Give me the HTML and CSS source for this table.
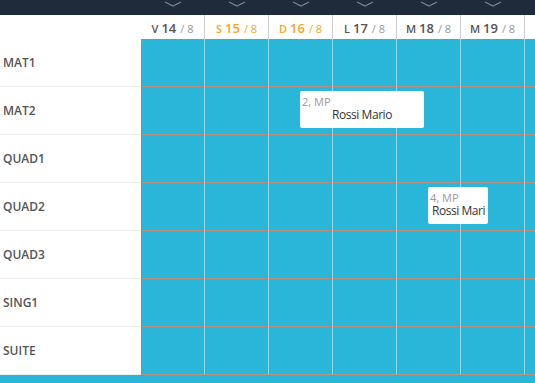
FILE: index.html
```html
<!DOCTYPE html>
<html lang="it">
<head>
<meta charset="utf-8">
<title>Planning camere</title>
<link rel="stylesheet" href="styles.css">
</head>
<body>
<div class="page">
  <div class="topbar">
    <div class="tb-spacer"></div>
    <div class="tb-col"><svg class="chev" viewBox="0 0 18 6" width="18" height="6"><polyline points="1,1 9,5 17,1"/></svg></div>
    <div class="tb-col"><svg class="chev" viewBox="0 0 18 6" width="18" height="6"><polyline points="1,1 9,5 17,1"/></svg></div>
    <div class="tb-col"><svg class="chev" viewBox="0 0 18 6" width="18" height="6"><polyline points="1,1 9,5 17,1"/></svg></div>
    <div class="tb-col"><svg class="chev" viewBox="0 0 18 6" width="18" height="6"><polyline points="1,1 9,5 17,1"/></svg></div>
    <div class="tb-col"><svg class="chev" viewBox="0 0 18 6" width="18" height="6"><polyline points="1,1 9,5 17,1"/></svg></div>
    <div class="tb-col"><svg class="chev" viewBox="0 0 18 6" width="18" height="6"><polyline points="1,1 9,5 17,1"/></svg></div>
    <div class="tb-col"></div>
  </div>

  <div class="header">
    <div class="h-label"></div>
    <div class="h-day"><span class="d">V</span><span class="n">14</span><span class="m">/ 8</span></div>
    <div class="h-day weekend"><span class="d">S</span><span class="n">15</span><span class="m">/ 8</span></div>
    <div class="h-day weekend"><span class="d">D</span><span class="n">16</span><span class="m">/ 8</span></div>
    <div class="h-day"><span class="d">L</span><span class="n">17</span><span class="m">/ 8</span></div>
    <div class="h-day"><span class="d">M</span><span class="n">18</span><span class="m">/ 8</span></div>
    <div class="h-day"><span class="d">M</span><span class="n">19</span><span class="m">/ 8</span></div>
    <div class="h-day"></div>
  </div>

  <div class="board">
    <div class="row"><div class="label">MAT1</div><div class="cell"></div><div class="cell"></div><div class="cell"></div><div class="cell"></div><div class="cell"></div><div class="cell"></div><div class="cell"></div></div>
    <div class="row"><div class="label">MAT2</div><div class="cell"></div><div class="cell"></div><div class="cell"></div><div class="cell"></div><div class="cell"></div><div class="cell"></div><div class="cell"></div></div>
    <div class="row"><div class="label">QUAD1</div><div class="cell"></div><div class="cell"></div><div class="cell"></div><div class="cell"></div><div class="cell"></div><div class="cell"></div><div class="cell"></div></div>
    <div class="row"><div class="label">QUAD2</div><div class="cell"></div><div class="cell"></div><div class="cell"></div><div class="cell"></div><div class="cell"></div><div class="cell"></div><div class="cell"></div></div>
    <div class="row"><div class="label">QUAD3</div><div class="cell"></div><div class="cell"></div><div class="cell"></div><div class="cell"></div><div class="cell"></div><div class="cell"></div><div class="cell"></div></div>
    <div class="row"><div class="label">SING1</div><div class="cell"></div><div class="cell"></div><div class="cell"></div><div class="cell"></div><div class="cell"></div><div class="cell"></div><div class="cell"></div></div>
    <div class="row"><div class="label">SUITE</div><div class="cell"></div><div class="cell"></div><div class="cell"></div><div class="cell"></div><div class="cell"></div><div class="cell"></div><div class="cell"></div></div>

    <div class="booking booking-a">
      <div class="b-meta">2, MP</div>
      <div class="b-name">Rossi Mario</div>
    </div>
    <div class="booking booking-b">
      <div class="b-meta">4, MP</div>
      <div class="b-name">Rossi Mari</div>
    </div>
  </div>

  <div class="footer"></div>
</div>
</body>
</html>
```

FILE: styles.css
```css
html, body {
  margin: 0;
  padding: 0;
}

body {
  width: 535px;
  height: 383px;
  overflow: hidden;
  background: #ffffff;
  font-family: "Open Sans", "Noto Sans", sans-serif;
}

.page {
  width: 535px;
  overflow: hidden;
}

.topbar,
.header,
.row {
  display: grid;
  grid-template-columns: 141px repeat(6, 64px) 10px;
}

.topbar {
  height: 15px;
  background: #1f2a3a;
}

.tb-col {
  display: flex;
  justify-content: center;
  padding-top: 1px;
}

.chev {
  display: block;
  fill: none;
  stroke: #7b8696;
  stroke-width: 1.2;
}

.header {
  height: 24px;
  background: #ffffff;
}

.h-day {
  display: flex;
  align-items: center;
  justify-content: center;
  border-right: 1px solid #cfcfcf;
  color: #555555;
  padding-top: 2px;
  box-sizing: border-box;
  white-space: nowrap;
}

.h-day:last-child {
  border-right: 0;
}

.h-day .d {
  font-size: 11px;
  font-weight: 600;
  margin-right: 3px;
}

.h-day .n {
  font-size: 13px;
  font-weight: 600;
  margin-right: 4px;
}

.h-day .m {
  font-size: 11px;
  font-weight: 400;
  color: #999999;
}

.h-day.weekend,
.h-day.weekend .m {
  color: #f5a623;
}

.board {
  position: relative;
}

.row {
  height: 48px;
}

.label {
  display: flex;
  align-items: center;
  padding-left: 3px;
  font-size: 12px;
  font-weight: 600;
  color: #555555;
  border-bottom: 1px solid #ececec;
  background: #ffffff;
}

.cell {
  background: #29b6d8;
  border-right: 1px solid #8fd9ee;
  border-bottom: 1px solid #b8907f;
}

.cell:last-child {
  border-right: 0;
}

.booking {
  position: absolute;
  height: 37px;
  box-sizing: border-box;
  background: #ffffff;
  border-radius: 2px;
  padding: 4px 2px 0 2px;
  white-space: nowrap;
}

.booking-a {
  left: 300px;
  top: 52px;
  width: 124px;
}

.booking-b {
  left: 428px;
  top: 148px;
  width: 60px;
}

.b-meta {
  font-size: 11px;
  line-height: 13px;
  color: #9a9a9a;
}

.b-name {
  font-size: 12px;
  line-height: 14px;
  color: #333333;
  text-align: center;
  letter-spacing: -0.45px;
  padding: 0 2px;
}

.footer {
  height: 8px;
  background: #29b6d8;
}
```
